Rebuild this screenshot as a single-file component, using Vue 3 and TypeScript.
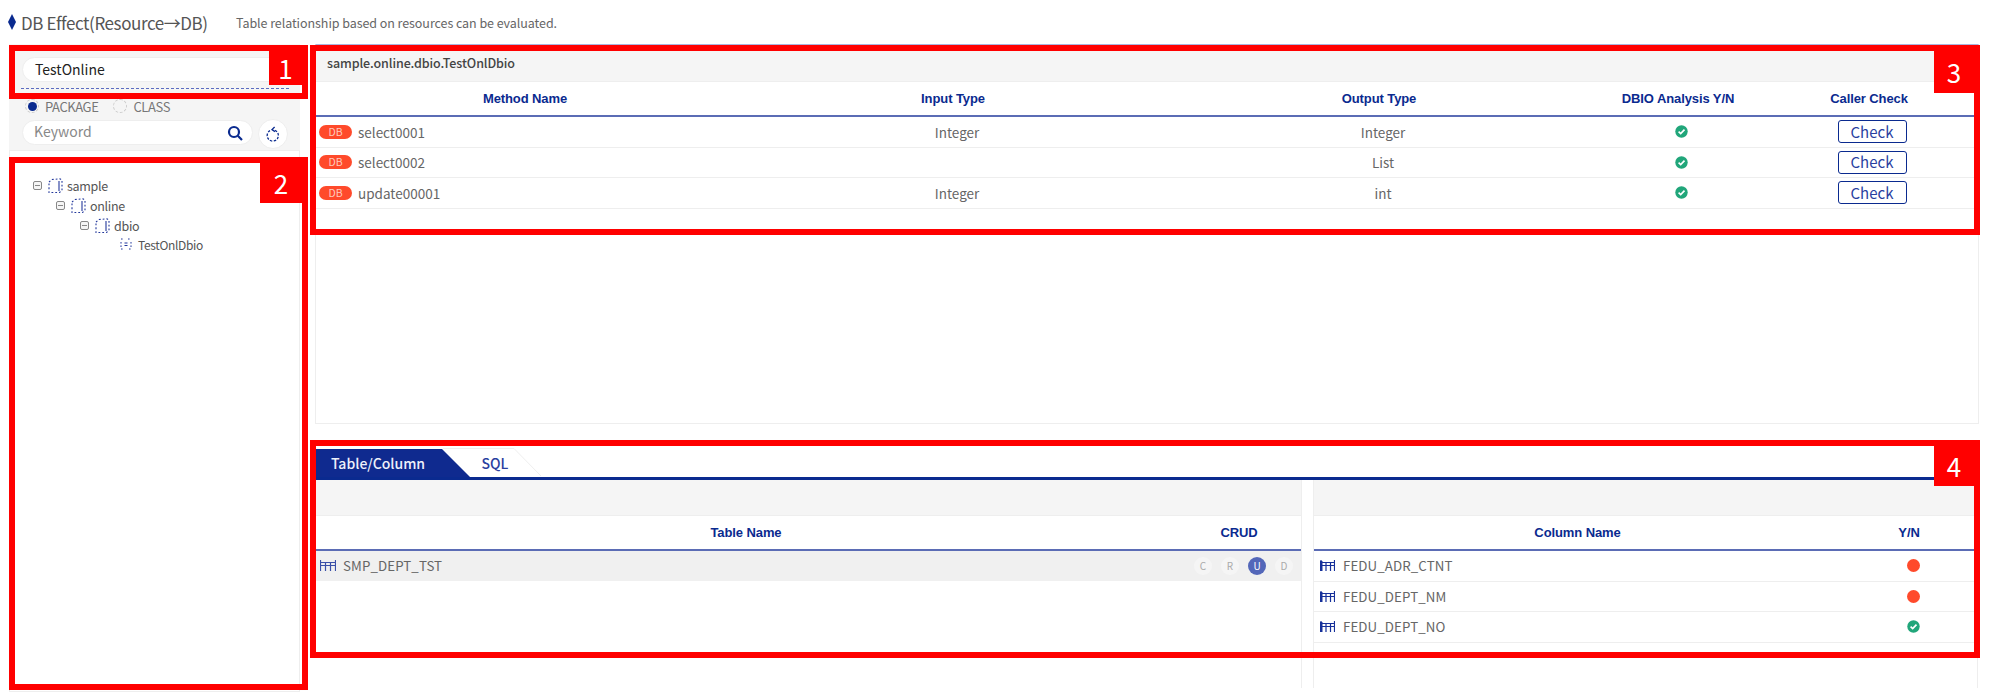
<script setup lang="ts">
interface MethodRow { name: string; input: string; output: string }
interface ColumnRow { name: string; ok: boolean }

const methods: MethodRow[] = [
  { name: 'select0001', input: 'Integer', output: 'Integer' },
  { name: 'select0002', input: '', output: 'List' },
  { name: 'update00001', input: 'Integer', output: 'int' },
]
const tree = [
  { name: 'sample', level: 0 },
  { name: 'online', level: 1 },
  { name: 'dbio', level: 2 },
]
const crud = ['C', 'R', 'U', 'D']
const columns: ColumnRow[] = [
  { name: 'FEDU_ADR_CTNT', ok: false },
  { name: 'FEDU_DEPT_NM', ok: false },
  { name: 'FEDU_DEPT_NO', ok: true },
]
const marks = [1, 2, 3, 4]
</script>

<template>
  <div class="page">
    <header class="title-bar">
      <span class="diamond"></span>
      <h1 class="title">DB Effect(Resource→DB)</h1>
      <p class="subtitle">Table relationship based on resources can be evaluated.</p>
    </header>

    <div class="body">
      <aside class="left">
        <div class="search-area">
          <div class="pill main-pill">TestOnline</div>
          <div class="dash"></div>
          <div class="radios">
            <span class="radio on"><i></i></span><span class="radio-label">PACKAGE</span>
            <span class="radio second"></span><span class="radio-label">CLASS</span>
          </div>
          <div class="keyword-row">
            <div class="pill keyword">
              <span class="keyword-text">Keyword</span>
              <svg width="16" height="16" viewBox="0 0 16 16" fill="none" stroke="#0a2a8f" stroke-width="2.2">
                <circle cx="7" cy="7" r="5" />
                <path d="M10.8 10.8 15 15" />
              </svg>
            </div>
            <button class="refresh" type="button" aria-label="refresh">
              <svg width="14" height="16" viewBox="0 0 14 16" fill="none" stroke="#0a2a8f" stroke-width="1.3">
                <path d="M4 4.6A5.6 5.6 0 1 0 8.6 4.2" stroke-dasharray="2.4 1.4" />
                <path d="M8.6 1 6 3.6l3 2" />
              </svg>
            </button>
          </div>
        </div>
        <div class="tree">
          <div v-for="n in tree" :key="n.name" class="node" :class="'lv' + n.level">
            <span class="minus"></span>
            <svg class="folder" width="15" height="15" viewBox="0 0 15 15" fill="none" stroke="#23389c" stroke-width="1.1">
              <path d="M1 4 4 1.5 12 .8l2 1.2v10.5l-2.5 2H1z" stroke-dasharray="1.8 2" />
              <path d="M11 3v10" />
            </svg>
            <span class="node-text">{{ n.name }}</span>
          </div>
          <div class="node leaf">
            <svg width="12" height="12" viewBox="0 0 12 12" fill="none" stroke="#23389c" stroke-width="1">
              <path d="M1 1h3M8 1h3M1 11h2M9 11h2M1 4v5M11 4v5" stroke-dasharray="1.6 1.8" />
              <path d="M4.5 5h3M4.5 7.5h3" stroke-width="1.2" />
            </svg>
            <span class="node-text">TestOnlDbio</span>
          </div>
        </div>
      </aside>

      <main class="right">
        <section class="method-panel">
          <div class="panel-title">sample.online.dbio.TestOnlDbio</div>
          <div class="grid method-grid head">
            <span>Method Name</span><span>Input Type</span><span>Output Type</span><span>DBIO Analysis Y/N</span><span>Caller Check</span>
          </div>
          <div v-for="m in methods" :key="m.name" class="grid method-grid row">
            <span class="method-name"><b class="db">DB</b>{{ m.name }}</span>
            <span class="type-cell">{{ m.input }}</span>
            <span class="type-cell">{{ m.output }}</span>
            <span class="icon-cell">
              <svg class="ok" width="13" height="13" viewBox="0 0 13 13"><circle cx="6.5" cy="6.5" r="6.2" fill="#21a67a" /><path d="M3.6 6.6l2.1 2 3.8-3.9" fill="none" stroke="#fff" stroke-width="1.7" /></svg>
            </span>
            <span class="icon-cell"><button class="check" type="button">Check</button></span>
          </div>
        </section>

        <section class="detail">
          <div class="tabs">
            <span class="tab active">Table/Column</span>
            <span class="tab plain">
              SQL
              <svg class="tab-edge" width="100" height="29" viewBox="0 0 100 29" fill="none" stroke="#eee">
                <path d="M0 .5H71L98 28" />
              </svg>
            </span>
          </div>
          <div class="split">
            <div class="pane table-pane">
              <div class="gray-band"></div>
              <div class="grid table-grid head"><span>Table Name</span><span>CRUD</span></div>
              <div class="grid table-grid row selected">
                <span class="name-cell">
                  <svg class="tbl" width="16" height="11" viewBox="0 0 16 11" fill="none" stroke="#3a4fa8" stroke-width="1.2">
                    <path d="M0 2.5h16M0 5.5h16M.5 0v11M5.5 2v9M10.5 2v9M15.5 0v11" />
                  </svg>
                  SMP_DEPT_TST
                </span>
                <span class="crud">
                  <i v-for="c in crud" :key="c" :class="{ active: c === 'U' }">{{ c }}</i>
                </span>
              </div>
            </div>
            <div class="pane column-pane">
              <div class="gray-band"></div>
              <div class="grid column-grid head"><span>Column Name</span><span>Y/N</span></div>
              <div v-for="c in columns" :key="c.name" class="grid column-grid row">
                <span class="name-cell">
                  <svg class="tbl" width="15" height="11" viewBox="0 0 15 11" fill="none" stroke="#16309a" stroke-width="1.2">
                    <path d="M0 2.5h15M0 5.5h15M1 0v11M6 3v8M10.5 3v8M14.5 0v11" />
                    <path d="M0 1h2.5v10H0z" fill="#16309a" stroke="none" />
                  </svg>
                  {{ c.name }}
                </span>
                <span class="icon-cell yn">
                  <svg v-if="c.ok" width="13" height="13" viewBox="0 0 13 13"><circle cx="6.5" cy="6.5" r="6.2" fill="#21a67a" /><path d="M3.6 6.6l2.1 2 3.8-3.9" fill="none" stroke="#fff" stroke-width="1.7" /></svg>
                  <em v-else class="dot"></em>
                </span>
              </div>
            </div>
          </div>
        </section>
      </main>
    </div>

    <div v-for="n in marks" :key="n" class="mark" :class="'mark' + n"><span>{{ n }}</span></div>
  </div>
</template>

<style>
html, body { margin: 0; background: #fff; }
</style>

<style scoped>
.page {
  position: relative;
  width: 2000px;
  height: 692px;
  overflow: hidden;
  background: #fff;
  color: #666;
  font-family: "Noto Sans CJK KR", "Noto Sans", sans-serif;
  font-size: 14px;
}
.title-bar { display: flex; align-items: center; height: 44px; padding-left: 8px; box-sizing: border-box; }
.diamond { width: 8px; height: 16px; background: #0a2a8f; clip-path: polygon(50% 0, 100% 50%, 50% 100%, 0 50%); margin-right: 5px; }
.title { margin: 0; font-size: 17px; font-weight: 400; color: #555; width: 215px; letter-spacing: -.42px; white-space: nowrap; }
.subtitle { margin: 0; font-size: 12.5px; color: #666; letter-spacing: -.06px; white-space: nowrap; }
.body { display: flex; height: 648px; padding-left: 9px; gap: 15px; }

.left { width: 291px; display: flex; flex-direction: column; }
.search-area { height: 106px; background: #f5f5f5; padding: 13px 0 0 13px; box-sizing: border-box; }
.pill { background: #fff; border: 1px solid #eee; border-radius: 13px; box-sizing: border-box; }
.main-pill { width: 262px; height: 25px; line-height: 22px; padding-left: 12px; color: #222; font-size: 14px; }
.dash { width: 268px; margin: 6px 0 0 -1px; border-top: 1px dashed #5b6cc0; height: 0; }
.radios { display: flex; align-items: center; height: 24px; margin-top: 5px; font-size: 13px; color: #777; }
.radio { width: 14px; height: 14px; margin-left: 3px; border-radius: 50%; border: 1px dashed #ccc; box-sizing: border-box; display: flex; align-items: center; justify-content: center; }
.radio i { width: 9px; height: 9px; border-radius: 50%; background: #0a2a8f; }
.radio.second { margin-left: 15px; }
.radio-label { margin-left: 6px; letter-spacing: -.4px; }
.keyword-row { display: flex; align-items: center; gap: 5px; margin-top: -2px; }
.keyword { width: 231px; height: 25px; display: flex; align-items: center; justify-content: space-between; padding: 0 9px 0 11px; color: #888; font-size: 14px; }
.keyword-text { margin-bottom: 3px; }
.refresh { width: 30px; height: 30px; padding: 0; background: #fff; border: 1px solid #eee; border-radius: 50%; display: flex; align-items: center; justify-content: center; margin-top: 3px; }

.tree { flex: 1; border: 1px solid #eee; padding-top: 24px; box-sizing: border-box; font-size: 12.5px; color: #555; }
.node { display: flex; align-items: center; height: 20px; }
.lv0 { padding-left: 23px; }
.lv1 { padding-left: 46px; }
.lv2 { padding-left: 70px; }
.leaf { padding-left: 110px; height: 18px; gap: 6px; }
.minus { width: 9px; height: 9px; border: 1px solid #888; border-radius: 2px; box-sizing: border-box; background: linear-gradient(#888, #888) center / 5px 1px no-repeat #f5f5f5; margin-right: 6px; }
.folder { margin-right: 4px; }
.node-text { white-space: nowrap; letter-spacing: -.3px; }
.leaf .node-text { font-size: 12px; letter-spacing: -.35px; }

.right { width: 1664px; }
.method-panel { height: 380px; box-sizing: border-box; border: 1px solid #eee; border-top-color: #aab4dd; }
.panel-title { height: 37px; line-height: 36px; background: #f5f5f5; border-bottom: 1px solid #eee; padding-left: 11px; font-size: 12.5px; font-weight: 500; color: #444; box-sizing: border-box; letter-spacing: -.1px; }
.grid { display: grid; align-items: center; text-align: center; }
.method-grid { grid-template-columns: 418px 438px 414px 184px 198px; }
.head { border-bottom: 2px solid #5b6cb5; height: 33px; font-family: "Liberation Sans", sans-serif; font-weight: 700; font-size: 13px; color: #0a2a8f; letter-spacing: -.1px; }
.row { height: 29.5px; border-bottom: 1px solid #eee; font-size: 13.5px; color: #666; }
.type-cell { padding-left: 8px; }
.method-name { display: flex; align-items: center; text-align: left; padding-left: 3px; }
.db { width: 33px; height: 14px; line-height: 13px; margin-right: 6px; border-radius: 7px; background: #ff4a2b; color: #ffc9bd; font-size: 10.5px; font-weight: 400; text-align: center; }
.icon-cell { display: flex; justify-content: center; align-items: center; }
.ok { margin-left: 7px; }
.check { width: 69px; height: 23px; padding: 0; background: #fff; border: 1px solid #0a2a8f; border-radius: 3px; color: #2a3f9f; font-family: inherit; font-size: 15px; line-height: 20px; margin-left: 6px; }

.detail { margin-top: 25px; }
.tabs { display: flex; height: 31px; border-bottom: 3px solid #0a2a8f; box-sizing: border-box; }
.tab { display: flex; align-items: center; justify-content: center; font-size: 14px; height: 28px; }
.tab.active { width: 154px; margin-left: 1px; background: #0f2a8f; color: #eef1fa; font-weight: 500; clip-path: polygon(0 0, 126px 0, 100% 100%, 0 100%); padding-right: 30px; box-sizing: border-box; }
.tab.plain { position: relative; width: 70px; color: #2a3f9f; font-weight: 500; padding-right: 20px; box-sizing: border-box; }
.tab-edge { position: absolute; left: -27px; top: -1px; }
.split { display: flex; gap: 11px; height: 208px; }
.pane { border-right: 1px solid #eee; box-sizing: border-box; }
.table-pane { width: 986px; margin-left: 1px; }
.column-pane { width: 665px; border-left: 1px solid #eee; }
.gray-band { height: 36px; background: #f5f5f5; border-bottom: 1px solid #eee; box-sizing: border-box; }
.table-grid { grid-template-columns: 860px 126px; }
.table-pane .row { border-bottom: none; }
.column-grid { grid-template-columns: 527px 136px; }
.selected { background: #f0f0f0; }
.name-cell { display: flex; align-items: center; gap: 7px; padding-left: 4px; text-align: left; letter-spacing: .1px; font-size: 13.3px; }
.column-pane .name-cell { padding-left: 6px; gap: 8px; }
.crud { display: flex; align-items: center; justify-content: flex-end; padding-right: 9px; gap: 9px; }
.crud i { width: 18px; height: 18px; line-height: 17px; border-radius: 50%; background: #f5f5f5; color: #aaa; font-size: 10px; font-style: normal; text-align: center; }
.crud i.active { background: #5367b9; color: #fff; }
.yn { padding-left: 8px; }
.dot { width: 13px; height: 13px; border-radius: 50%; background: #ff4a2b; }

.mark { position: absolute; box-sizing: border-box; border: 6px solid #f00; pointer-events: none; }
.mark span { position: absolute; top: 0; right: 0; background: #f00; color: #fff; display: flex; align-items: center; justify-content: center; font-size: 26px; line-height: 1; }
.mark1 { left: 9px; top: 45px; width: 299px; height: 54px; }
.mark1 span { width: 33px; height: 34px; }
.mark2 { left: 9px; top: 157px; width: 299px; height: 533px; }
.mark2 span { width: 42px; height: 40px; }
.mark3 { left: 310px; top: 45px; width: 1670px; height: 190px; }
.mark3 span { width: 40px; height: 42px; }
.mark4 { left: 310px; top: 440px; width: 1670px; height: 218px; }
.mark4 span { width: 40px; height: 40px; }
</style>
